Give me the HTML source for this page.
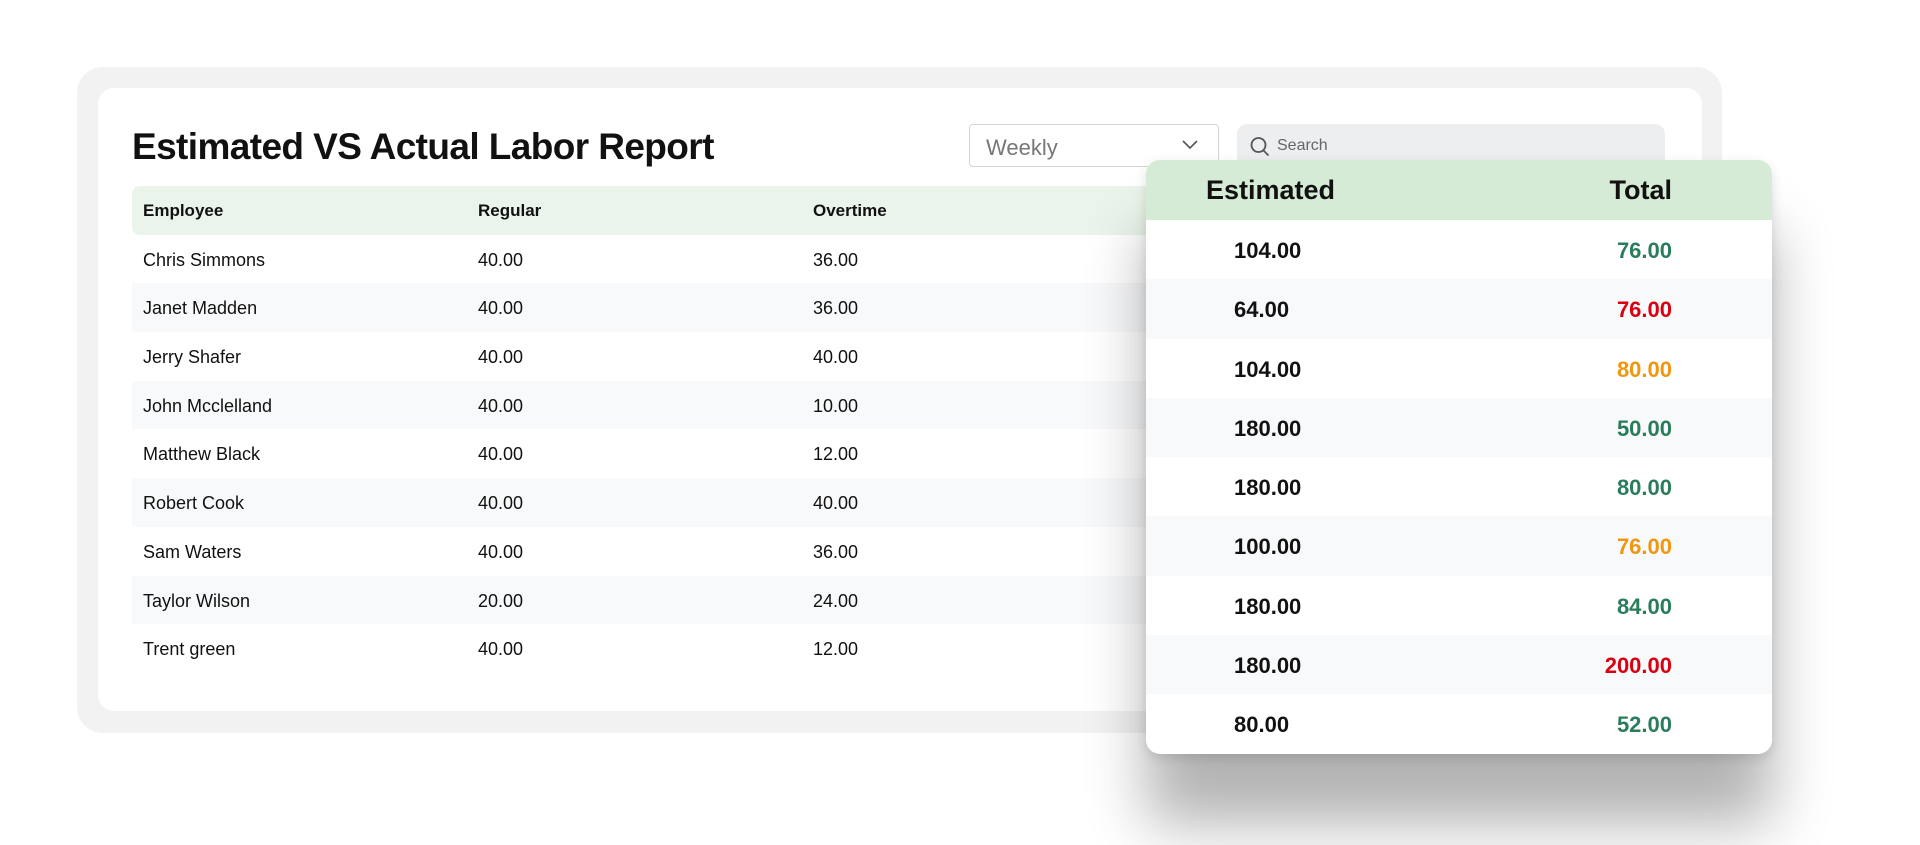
<!DOCTYPE html>
<html><head><meta charset="utf-8"><style>
*{margin:0;padding:0;box-sizing:border-box}
body{width:1920px;height:845px;background:#fff;font-family:"Liberation Sans",sans-serif;position:relative;overflow:hidden;color:#111}
.frame{position:absolute;left:77px;top:67px;width:1645px;height:666px;background:#f2f2f2;border-radius:26px}
.card{position:absolute;left:98px;top:88px;width:1604px;height:623px;background:#fff;border-radius:16px}
h1{position:absolute;left:132px;top:126px;font-size:37px;font-weight:700;letter-spacing:-0.6px;color:#111}
.sel{position:absolute;left:969px;top:124px;width:250px;height:43px;border:1.5px solid #d4d4d4;border-radius:4px;font-size:22px;color:#777;padding:10px 16px}
.sel svg{position:absolute;right:20px;top:15px}
.search{position:absolute;left:1237px;top:124px;width:428px;height:50px;background:#eceeef;border-radius:10px;font-size:16px;color:#666;padding:13px 0 0 40px}
.search svg{position:absolute;left:13px;top:12px}
.tbl{position:absolute;left:132px;top:186px;width:1150px}
.row{height:48.7px;display:flex;align-items:center;font-size:18px;position:relative}
.row.h{background:#eaf4ea;border-radius:8px;font-weight:700;font-size:17px}
.row.alt{background:#f8f9fa}
.row span{position:absolute;top:15px}
.c1{left:11px}.c2{left:346px}.c3{left:681px}
.ov{position:absolute;left:1146px;top:160px;width:626px;height:594px;background:#fff;border-radius:14px;overflow:hidden;box-shadow:0 70px 60px rgba(0,0,0,.3),0 4px 12px rgba(0,0,0,.12)}
.oh{height:60px;background:#d6ebd6;position:relative;font-weight:700;font-size:27px}
.oh span{position:absolute;top:15px}
.orow{height:59.3px;position:relative;font-size:22px;font-weight:700}
.orow.alt{background:#f8f9fa}
.orow span{position:absolute;top:18px}
.e{left:88px}.t{right:100px}
.g{color:#2a7d5a}.r{color:#d90012}.o{color:#f0960f}
</style></head><body>
<div class="frame"></div><div class="card"></div>
<h1>Estimated VS Actual Labor Report</h1>
<div class="sel">Weekly<svg width="16" height="10" viewBox="0 0 16 10"><path d="M1 1l7 7 7-7" fill="none" stroke="#555" stroke-width="1.6"/></svg></div>
<div class="search"><svg width="20" height="22" viewBox="0 0 20 22"><circle cx="8.5" cy="9" r="7" fill="none" stroke="#555" stroke-width="1.8"/><path d="M13.5 14.5l5 5" stroke="#555" stroke-width="1.8"/></svg>Search</div>
<div class="tbl">
<div class="row h"><span class="c1">Employee</span><span class="c2">Regular</span><span class="c3">Overtime</span></div>
<div class="row"><span class="c1">Chris Simmons</span><span class="c2">40.00</span><span class="c3">36.00</span></div>
<div class="row alt"><span class="c1">Janet Madden</span><span class="c2">40.00</span><span class="c3">36.00</span></div>
<div class="row"><span class="c1">Jerry Shafer</span><span class="c2">40.00</span><span class="c3">40.00</span></div>
<div class="row alt"><span class="c1">John Mcclelland</span><span class="c2">40.00</span><span class="c3">10.00</span></div>
<div class="row"><span class="c1">Matthew Black</span><span class="c2">40.00</span><span class="c3">12.00</span></div>
<div class="row alt"><span class="c1">Robert Cook</span><span class="c2">40.00</span><span class="c3">40.00</span></div>
<div class="row"><span class="c1">Sam Waters</span><span class="c2">40.00</span><span class="c3">36.00</span></div>
<div class="row alt"><span class="c1">Taylor Wilson</span><span class="c2">20.00</span><span class="c3">24.00</span></div>
<div class="row"><span class="c1">Trent green</span><span class="c2">40.00</span><span class="c3">12.00</span></div>
</div>
<div class="ov">
<div class="oh"><span style="left:60px">Estimated</span><span style="right:100px">Total</span></div>
<div class="orow"><span class="e">104.00</span><span class="t g">76.00</span></div>
<div class="orow alt"><span class="e">64.00</span><span class="t r">76.00</span></div>
<div class="orow"><span class="e">104.00</span><span class="t o">80.00</span></div>
<div class="orow alt"><span class="e">180.00</span><span class="t g">50.00</span></div>
<div class="orow"><span class="e">180.00</span><span class="t g">80.00</span></div>
<div class="orow alt"><span class="e">100.00</span><span class="t o">76.00</span></div>
<div class="orow"><span class="e">180.00</span><span class="t g">84.00</span></div>
<div class="orow alt"><span class="e">180.00</span><span class="t r">200.00</span></div>
<div class="orow"><span class="e">80.00</span><span class="t g">52.00</span></div>
</div>
</body></html>
